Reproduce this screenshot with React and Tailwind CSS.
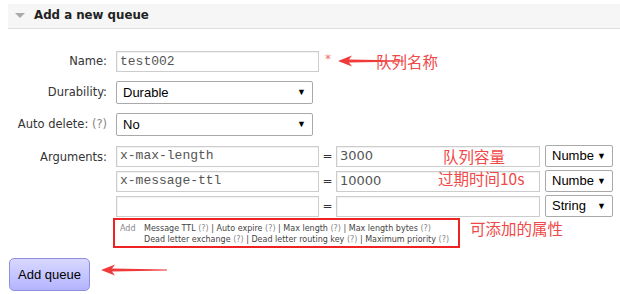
import React from "react";

const sans = "font-['DejaVu_Sans',Verdana,sans-serif]";
const arial = "font-['Liberation_Sans',Arial,sans-serif]";
const mono = "font-['Liberation_Mono','Courier_New',monospace]";
const cjk = "font-['Noto_Sans_CJK_SC',sans-serif]";

function TextBox({ value, className = "", font = mono }) {
  return (
    <div
      className={`h-[21px] border border-[#cccccc] bg-white flex items-center pl-[3px] text-[13px] text-[#555] shadow-[inset_1px_1px_1px_rgba(0,0,0,0.06)] ${font} ${className}`}
    >
      {value}
    </div>
  );
}

function SelectBox({ value, className = "" }) {
  return (
    <div
      className={`border border-[#a9a9a9] rounded-[2px] bg-white flex items-center justify-between pl-[6px] pr-[6px] text-[13px] text-black overflow-hidden ${arial} ${className}`}
    >
      <span className="whitespace-nowrap overflow-hidden">{value}</span>
      <span className="text-[9px] leading-none">▼</span>
    </div>
  );
}

function Help() {
  return <span className="text-[#888]">(?)</span>;
}

function Arrow({ className }) {
  return (
    <svg className={className} width="70" height="12" viewBox="0 0 70 12">
      <path d="M2 6 L16 0.5 L13 4.6 L68 5.4 L68 6.6 L13 7.4 L16 11.5 Z" fill="#f03a3a" />
    </svg>
  );
}

export default function App() {
  return (
    <div className={`relative w-[620px] h-[294px] bg-white overflow-hidden ${sans}`}>
      {/* Section header */}
      <div className="ml-[8px] mt-[4px] h-[25px] bg-[#f6f6f6] border-b border-[#dddddd] flex items-center">
        <svg className="ml-[7px]" width="10" height="6" viewBox="0 0 10 6">
          <path d="M0 0 H10 L5 5 Z" fill="#aaaaaa" />
        </svg>
        <span className="ml-[9px] text-[11.8px] font-bold text-[#222]">Add a new queue</span>
      </div>

      {/* Form */}
      <div className="mt-[22px] flex flex-col gap-[9px] text-[11.5px] text-[#333]">
        <div className="flex items-center">
          <div className="w-[107px] text-right">Name:</div>
          <TextBox value="test002" className="ml-[9px] w-[203px]" />
          <span className="ml-[6px] -mt-[6px] text-[#f07070] text-[12px]">*</span>
        </div>

        <div className="flex items-center">
          <div className="w-[107px] text-right">Durability:</div>
          <SelectBox value="Durable" className="ml-[9px] w-[197px] h-[23px]" />
        </div>

        <div className="flex items-center">
          <div className="w-[107px] text-right">
            Auto delete: <Help />
          </div>
          <SelectBox value="No" className="ml-[9px] w-[197px] h-[23px]" />
        </div>

        <div className="flex items-start">
          <div className="w-[107px] text-right mt-[4px]">Arguments:</div>
          <div className="ml-[9px] flex flex-col">
            <div className="flex flex-col gap-[3px]">
              {[
                ["x-max-length", "3000", "Number"],
                ["x-message-ttl", "10000", "Number"],
                ["", "", "String"],
              ].map(([k, v, t], i) => (
                <div key={i} className="flex items-center">
                  <TextBox value={k} className="w-[203px]" />
                  <span className="w-[17px] text-center text-[12px] text-[#333]">=</span>
                  <TextBox value={v} font={sans} className="w-[204px] text-[12px]" />
                  <SelectBox value={t === "Number" ? "Numbe" : t} className="ml-[5px] w-[68px] h-[22px]" />
                </div>
              ))}
            </div>
            <div className="-ml-[3px] mt-[1px] w-[347px] h-[30px] border-2 border-[#ee2222] flex items-start pt-[3px] pl-[5px] text-[8px] leading-[11px] text-[#444]">
              <span className="text-[#888] w-[24px] shrink-0">Add</span>
              <div className="flex flex-col">
                <span className="whitespace-nowrap">
                  Message TTL <Help /> | Auto expire <Help /> | Max length <Help /> | Max length bytes <Help />
                </span>
                <span className="whitespace-nowrap">
                  Dead letter exchange <Help /> | Dead letter routing key <Help /> | Maximum priority <Help />
                </span>
              </div>
            </div>
          </div>
        </div>

        <div className="ml-[9px] mt-[1px]">
          <button
            className={`w-[81px] h-[33px] rounded-[5px] border border-[#8f8fdf] bg-gradient-to-b from-[#d8d8ff] to-[#b4b4ff] text-[13px] text-black ${arial}`}
          >
            Add queue
          </button>
        </div>
      </div>

      {/* Annotations */}
      <Arrow className="absolute left-[336px] top-[55px]" />
      <span className={`absolute left-[376px] top-[54px] text-[15.5px] leading-[15px] text-[#f04848] ${cjk}`}>队列名称</span>
      <span className={`absolute left-[443px] top-[149px] text-[15.5px] leading-[15px] text-[#f04848] ${cjk}`}>队列容量</span>
      <span className={`absolute left-[438px] top-[171px] text-[15.5px] leading-[15px] text-[#f04848] ${cjk}`}>过期时间10s</span>
      <span className={`absolute left-[470px] top-[221px] text-[15.5px] leading-[15px] text-[#f04848] ${cjk}`}>可添加的属性</span>
      <Arrow className="absolute left-[99px] top-[264px]" />
    </div>
  );
}
